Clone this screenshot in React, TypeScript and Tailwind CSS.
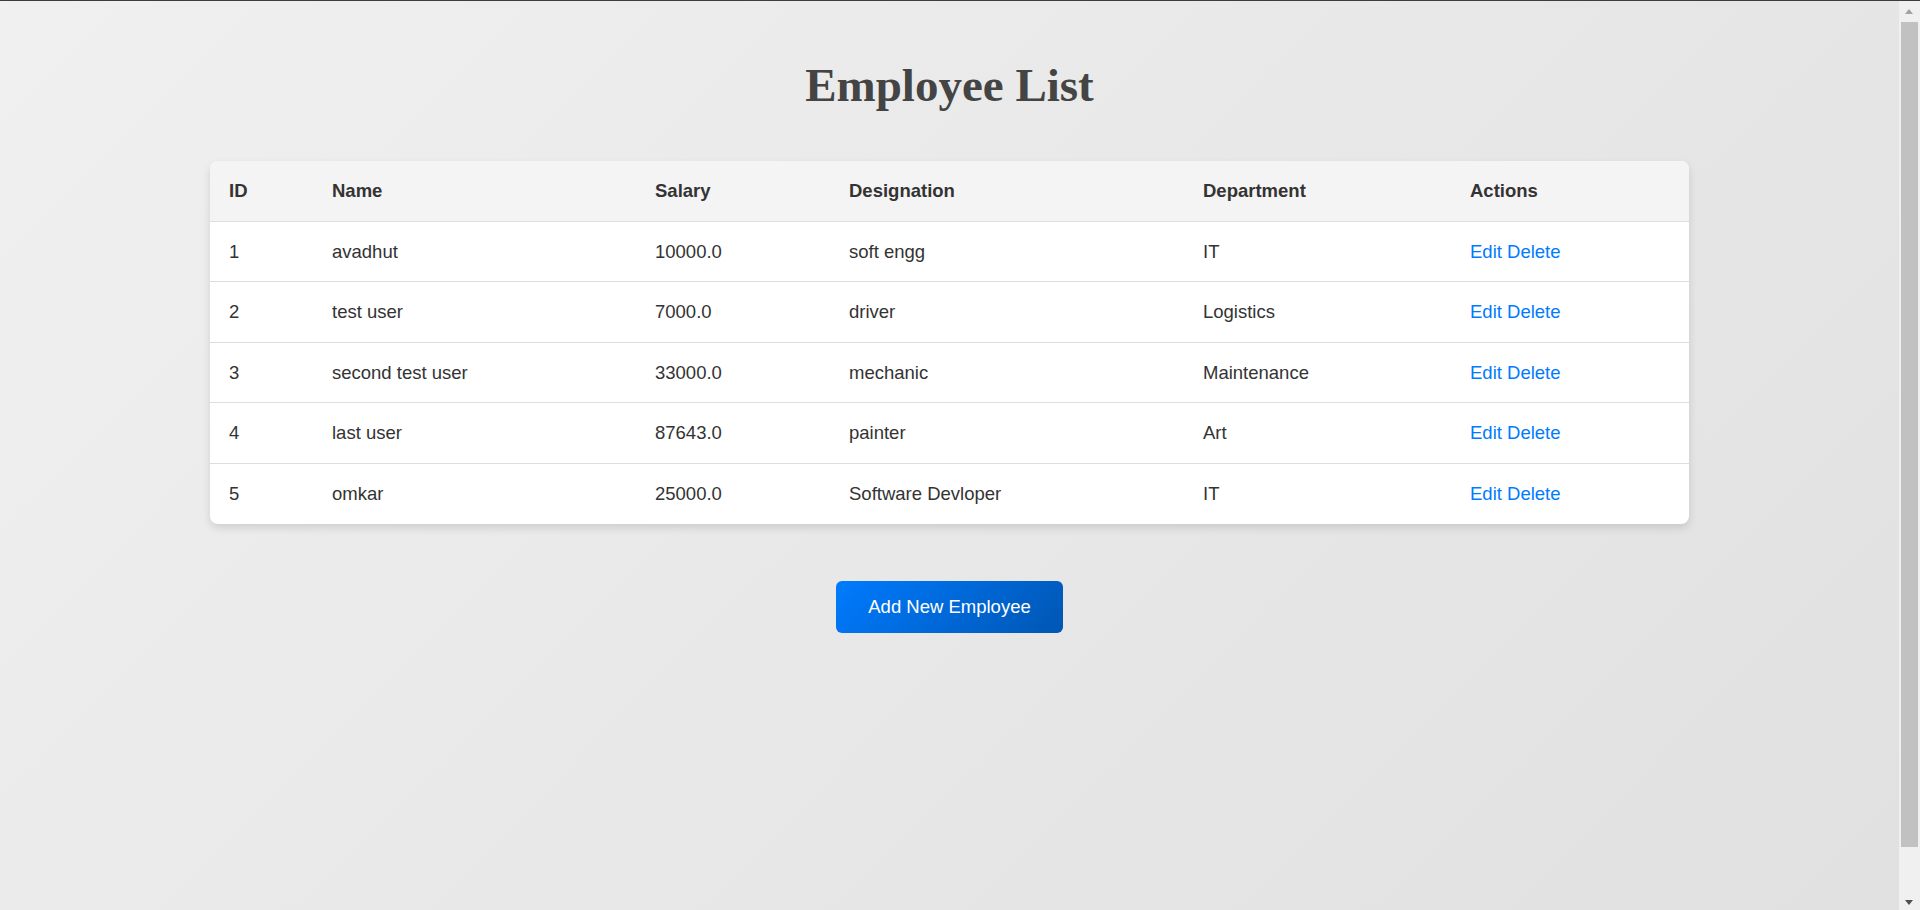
import React from 'react';

interface Employee {
  id: number;
  name: string;
  salary: string;
  designation: string;
  department: string;
}

const employees: Employee[] = [
  { id: 1, name: 'avadhut', salary: '10000.0', designation: 'soft engg', department: 'IT' },
  { id: 2, name: 'test user', salary: '7000.0', designation: 'driver', department: 'Logistics' },
  { id: 3, name: 'second test user', salary: '33000.0', designation: 'mechanic', department: 'Maintenance' },
  { id: 4, name: 'last user', salary: '87643.0', designation: 'painter', department: 'Art' },
  { id: 5, name: 'omkar', salary: '25000.0', designation: 'Software Devloper', department: 'IT' },
];

const headers = ['ID', 'Name', 'Salary', 'Designation', 'Department', 'Actions'];

// the browser's classic scrollbar, seen at the right edge of the page
const FakeScrollbar = () => (
  <div className="fixed right-0 top-[1px] bottom-0 w-[21px] bg-[#f0f0f0]">
    <div className="absolute left-[6px] top-[8px] h-0 w-0 border-x-[4.5px] border-b-[5px] border-x-transparent border-b-[#a3a3a3]" />
    <div className="absolute left-[2px] top-[21px] h-[825px] w-[17px] bg-[#c1c1c1]" />
    <div className="absolute bottom-[5px] left-[6px] h-0 w-0 border-x-[4.5px] border-t-[5px] border-x-transparent border-t-[#505050]" />
  </div>
);

export default function App() {
  return (
    <div
      className="min-h-[960px] border-t border-[#3a3d41] bg-[linear-gradient(135deg,#f0f0f0,#e0e0e0)] pr-[21px] text-[#333]"
      style={{ fontFamily: '"Liberation Sans", Arial, sans-serif' }}
    >
      <h1
        className="pt-[58px] text-center text-[47px] font-bold leading-[53px] text-[#444]"
        style={{ fontFamily: '"Liberation Serif", "Times New Roman", serif' }}
      >
        Employee List
      </h1>

      <div className="mx-auto mt-[49px] w-[1479px] overflow-hidden rounded-lg bg-white shadow-[0_4px_8px_rgba(0,0,0,0.12)]">
        <table className="w-full table-fixed border-collapse text-left text-[18.5px] leading-[21.6px]">
          <colgroup>
            <col className="w-[103px]" />
            <col className="w-[323px]" />
            <col className="w-[194px]" />
            <col className="w-[354px]" />
            <col className="w-[267px]" />
            <col className="w-[238px]" />
          </colgroup>
          <thead>
            <tr className="bg-[#f4f4f4]">
              {headers.map((h) => (
                <th key={h} className="border-b border-[#ddd] pl-[19px] pr-[17px] py-[19px] font-bold text-[#333]">
                  {h}
                </th>
              ))}
            </tr>
          </thead>
          <tbody>
            {employees.map((emp, i) => (
              <tr key={emp.id}>
                {[emp.id, emp.name, emp.salary, emp.designation, emp.department].map((v, j) => (
                  <td
                    key={j}
                    className={`pl-[19px] pr-[17px] py-[19px] ${i < employees.length - 1 ? 'border-b border-[#ddd]' : ''}`}
                  >
                    {v}
                  </td>
                ))}
                <td className={`pl-[19px] pr-[17px] py-[19px] ${i < employees.length - 1 ? 'border-b border-[#ddd]' : ''}`}>
                  <a href="#" className="text-[#007bff]">Edit</a>{' '}
                  <a href="#" className="text-[#007bff]">Delete</a>
                </td>
              </tr>
            ))}
          </tbody>
        </table>
      </div>

      <div className="mt-[57px] flex justify-center">
        <button
          type="button"
          className="flex h-[52px] items-center rounded-md bg-[linear-gradient(135deg,#007bff,#0056b3)] px-[32px] text-[18.5px] text-white"
        >
          Add New Employee
        </button>
      </div>

      <FakeScrollbar />
    </div>
  );
}
